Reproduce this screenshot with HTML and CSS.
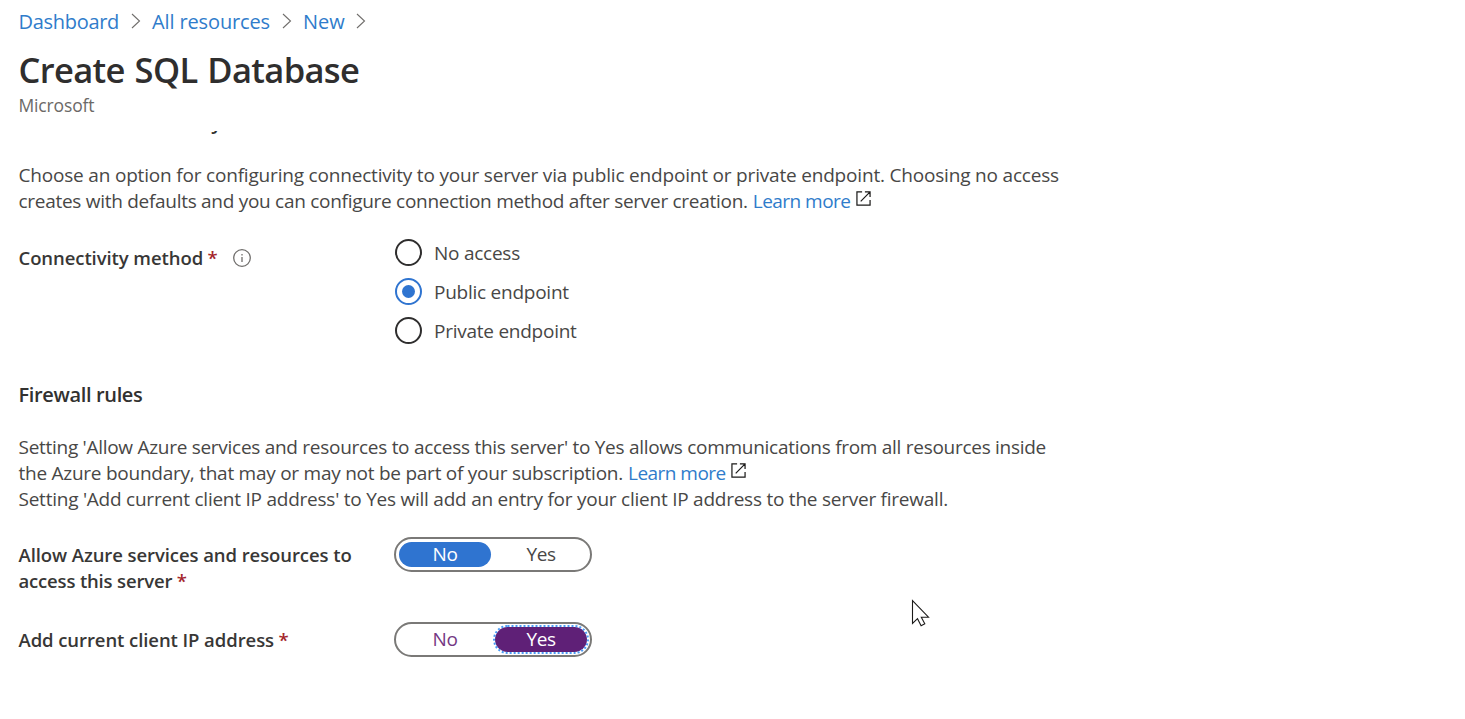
FILE: index.html
```html
<!DOCTYPE html>
<html lang="en">
<head>
<meta charset="utf-8">
<title>Create SQL Database</title>
<link rel="stylesheet" href="styles.css">
</head>
<body>
<header class="header">
  <nav class="breadcrumb">
    <a class="crumb crumb-dashboard">Dashboard</a>
    <svg class="chevron" viewBox="0 0 10 16"><path d="M1 1l7.500 7L1 15"/></svg>
    <a class="crumb crumb-resources">All resources</a>
    <svg class="chevron" viewBox="0 0 10 16"><path d="M1 1l7.500 7L1 15"/></svg>
    <a class="crumb crumb-new">New</a>
    <svg class="chevron" viewBox="0 0 10 16"><path d="M1 1l7.500 7L1 15"/></svg>
  </nav>
  <h1 class="title">Create SQL Database</h1>
  <p class="subtitle">Microsoft</p>
</header>
<main class="content">
  <h2 class="section-title section-network">Network connectivity</h2>
  <div class="description">
    <div class="line"><span class="intro-first">Choose an option for configuring connectivity to your server via public endpoint or private endpoint. Choosing no access</span></div>
    <div class="line"><span class="intro-second">creates with defaults and you can configure connection method after server creation.</span><a class="link">Learn more</a><svg class="external" viewBox="0 0 16 16"><path d="M6.500 1H1v14h14V9.500M9.500 1H15v5.500M15 1L5 11"/></svg></div>
  </div>
  <div class="field field-method">
    <div class="label"><span>Connectivity method</span><span class="star">*</span><svg class="info" viewBox="0 0 18 18"><circle cx="9" cy="9" r="8.300"/><path d="M9 8v5M9 5v1.500"/></svg></div>
    <div class="radios">
      <div class="radio"><i class="dot"></i><span>No access</span></div>
      <div class="radio selected"><i class="dot"></i><span>Public endpoint</span></div>
      <div class="radio"><i class="dot"></i><span>Private endpoint</span></div>
    </div>
  </div>
  <h2 class="section-title section-firewall">Firewall rules</h2>
  <div class="description">
    <div class="line"><span class="rules-first">Setting 'Allow Azure services and resources to access this server' to Yes allows communications from all resources inside</span></div>
    <div class="line"><span class="rules-second">the Azure boundary, that may or may not be part of your subscription.</span><a class="link">Learn more</a><svg class="external" viewBox="0 0 16 16"><path d="M6.500 1H1v14h14V9.500M9.500 1H15v5.500M15 1L5 11"/></svg></div>
    <div class="line"><span class="rules-third">Setting 'Add current client IP address' to Yes will add an entry for your client IP address to the server firewall.</span></div>
  </div>
  <div class="field field-allow">
    <div class="label two-line"><div class="line">Allow Azure services and resources to</div><div class="line"><span class="tight">access this server</span><span class="star">*</span></div></div>
    <div class="toggle"><div class="option on">No</div><div class="option">Yes</div></div>
  </div>
  <div class="field field-client">
    <div class="label"><span>Add current client IP address</span><span class="star">*</span></div>
    <div class="toggle visited"><div class="option">No</div><div class="option on focused">Yes</div></div>
  </div>
</main>
<svg class="cursor" viewBox="0 0 20 29"><path d="M1.500 1.500v23l5-4.800 3.600 7 3.700-1.900-3.500-6.600h7.200z"/></svg>
</body>
</html>
```
FILE: styles.css
```css
* { box-sizing: border-box; }
body {
  margin: 0;
  width: 1465px;
  height: 719px;
  overflow: hidden;
  background: #fff;
  color: #484746;
  font-family: "Open Sans", "Noto Sans", sans-serif;
  font-size: 19px;
  line-height: 26px;
}
h1, h2, p { margin: 0; white-space: nowrap; }
span, a { white-space: nowrap; }
a { color: #2f7ccb; }
svg { fill: none; flex: none; }
.header { height: 131px; padding: 9px 0 0 18.5px; }
.breadcrumb { display: flex; align-items: center; height: 26px; font-size: 20px; }
.crumb-dashboard { letter-spacing: -0.3px; }
.crumb-resources { letter-spacing: -0.13px; }
.chevron { width: 10px; height: 16px; stroke: #706e6c; stroke-width: 1.1; margin: 0 11.5px 2px; }
.title { margin-top: 11px; font-size: 34.5px; line-height: 48px; font-weight: 600; letter-spacing: -0.65px; word-spacing: 1.5px; color: #2f2e2e; }
.subtitle { font-size: 17.5px; line-height: 22px; letter-spacing: -0.15px; color: #6b6967; }
.content { height: 588px; overflow: hidden; padding-left: 18.5px; }
.section-title { font-size: 20px; line-height: 26px; font-weight: 600; letter-spacing: -0.35px; color: #323130; }
.section-network { margin-top: -22px; margin-bottom: 27px; letter-spacing: -0.15px; }
.line { display: flex; height: 26px; }
.intro-first { letter-spacing: -0.187px; }
.intro-second { letter-spacing: -0.285px; }
.rules-first { letter-spacing: -0.282px; }
.rules-second { letter-spacing: -0.25px; }
.rules-third { letter-spacing: -0.24px; }
.link { margin-left: 5px; letter-spacing: -0.52px; }
.external { width: 15px; height: 15px; margin: 3px 0 0 5.5px; stroke: #1b1a19; stroke-width: 1.3; }
.field { display: flex; }
.label { display: flex; width: 375.5px; font-weight: 600; font-size: 18.5px; letter-spacing: -0.08px; color: #383736; }
.two-line { display: block; }
.tight { letter-spacing: -0.17px; }
.star { color: #a4262c; margin-left: 4.5px; }
.info { width: 18px; height: 18px; stroke: #706e6c; stroke-width: 1.3; margin: 4px 0 0 15px; }
.field-method { padding-top: 19px; }
.field-method .label { padding-top: 12px; }
.radios { display: flex; flex-direction: column; padding-left: 1px; letter-spacing: -0.25px; }
.radio { display: flex; align-items: center; height: 39px; }
.dot { width: 27px; height: 27px; border: 2px solid #2f2e2e; border-radius: 50%; margin: 0 12px 1px 0; display: grid; place-items: center; }
.selected .dot { border-color: #2f74d0; }
.selected .dot::after { content: ""; width: 13px; height: 13px; border-radius: 50%; background: #2f74d0; }
.section-firewall { margin: 32px 0 26px; }
.field-allow { padding-top: 25px; height: 86px; }
.field-allow .label { padding-top: 5px; }
.field-client { padding-top: 24px; }
.field-client .label { padding-top: 5px; }
.toggle { display: flex; width: 198px; height: 35px; border: 2px solid #7a7977; border-radius: 18px; padding: 3px; gap: 4px; }
.option { width: 92px; height: 25px; border-radius: 13px; text-align: center; line-height: 24px; letter-spacing: -0.4px; }
.option.on { background: #2f74d0; color: #fff; }
.visited { color: #743883; }
.visited .on { background: #5f2077; }
.focused { outline: 2px dotted #4a9af5; }
.cursor { position: absolute; left: 911px; top: 599px; width: 20px; height: 29px; fill: #fff; stroke: #1b1a19; stroke-width: 1.1; }
```
